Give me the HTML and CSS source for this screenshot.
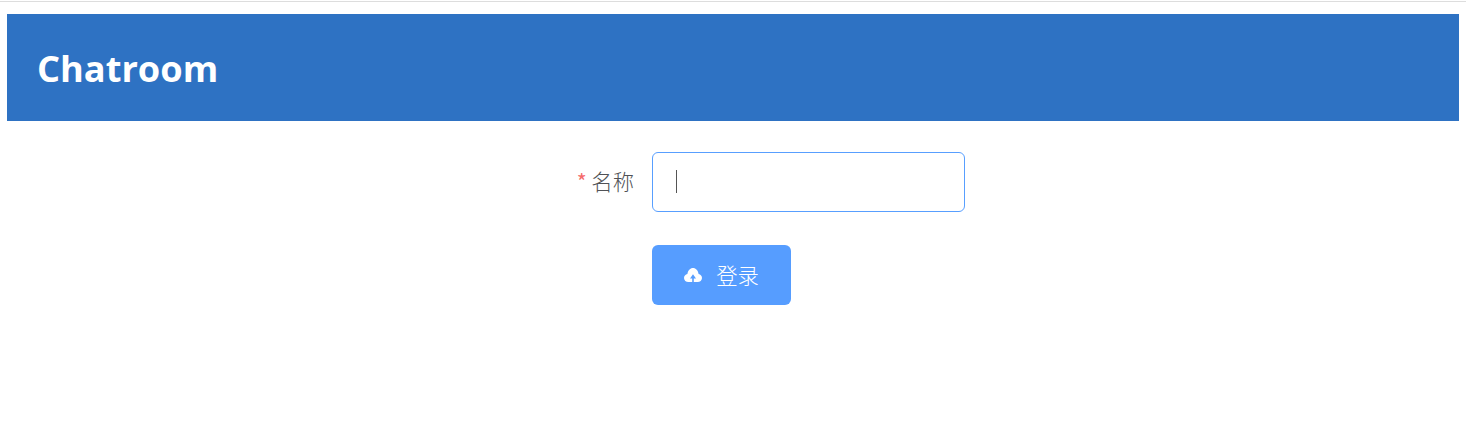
FILE: index.html
```html
<!DOCTYPE html>
<html>
<head>
  <title>Chatroom</title>
  <link rel="stylesheet" href="styles.css">
</head>
<body>
  <div class="container">
    <header class="header">
      <h1>Chatroom</h1>
    </header>
    <form class="login-form">
      <div class="form-item">
        <label class="form-label"><span class="required">*</span> 名称</label>
        <div class="form-input"><span class="caret"></span></div>
      </div>
      <div class="form-item">
        <div class="form-label"></div>
        <button type="button" class="login-button">
          <svg class="upload-icon" viewBox="0 0 18 14" width="18" height="14">
            <path fill="#fff" d="M4.4 14C2 14 0 12.200 0 9.900 0 7.900 1.400 6.300 3.400 5.900 3.900 2.600 6.200 0 9 0c2.800 0 5.100 2.600 5.600 5.900 2 .4 3.400 2 3.400 4 0 2.300-2 4.100-4.400 4.100H9.800v-3.500H12L9 6.200 6 10.500h2.200V14z"/>
          </svg>
          <span class="button-text">登录</span>
        </button>
      </div>
    </form>
  </div>
</body>
</html>
```

FILE: styles.css
```css
/* Login page */
body {
  margin: 0;
  padding: 0;
  font-family: "Noto Sans CJK SC", "Open Sans", sans-serif;
  background-color: #fff;
}

.container {
  border-top: 1px solid #ddd;
  margin-top: 1px;
  padding: 12px 7px 0;
}

.header {
  height: 107px;
  display: flex;
  align-items: center;
  padding-left: 30px;
  background-color: #2e72c3;
}

.header h1 {
  margin: 0;
  color: #fff;
  font-family: "Open Sans", sans-serif;
  font-size: 36.2px;
  font-weight: 700;
}

.login-form {
  display: flex;
  flex-direction: column;
  gap: 33px;
  padding-top: 31px;
}

.form-item {
  display: flex;
  align-items: center;
}

.form-label {
  width: 645px;
  padding-right: 18px;
  padding-bottom: 4px;
  box-sizing: border-box;
  text-align: right;
  color: #505256;
  font-size: 21.33px;
  font-weight: 300;
}

.required {
  color: #f56c6c;
  font-weight: 400;
}

.form-input {
  width: 313px;
  height: 60px;
  box-sizing: border-box;
  display: flex;
  align-items: center;
  padding-left: 23px;
  border: 1px solid #589fff;
  border-radius: 6px;
}

.caret {
  width: 1px;
  height: 23px;
  margin-top: -1px;
  background-color: #555;
}

.login-button {
  width: 139px;
  height: 60px;
  display: flex;
  align-items: center;
  justify-content: center;
  gap: 14px;
  padding: 0;
  border: none;
  border-radius: 6px;
  background-color: #569dff;
  color: #fff;
  font-family: inherit;
  font-size: 21.33px;
  font-weight: 300;
}

.button-text {
  padding-bottom: 2px;
}

.upload-icon {
  display: block;
}
```
